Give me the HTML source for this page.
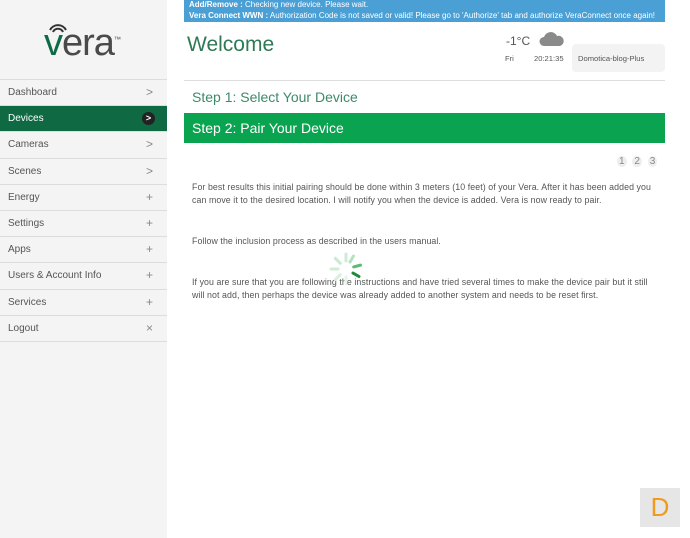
<!DOCTYPE html>
<html><head><style>
*{margin:0;padding:0;box-sizing:border-box}
body{width:690px;height:538px;overflow:hidden;background:#fff;font-family:"Liberation Sans",sans-serif;position:relative}
.side{position:absolute;left:0;top:0;width:167px;height:538px;background:#f4f4f4}
.logo{position:absolute;left:44px;top:22px;font-size:38px;color:#4a4a4a;letter-spacing:-1px}
.logo b{color:#0d6b45;font-weight:normal}
.menu{position:absolute;top:79px;left:0;width:167px;border-top:1px solid #ddd}
.menu div{height:26.2px;border-bottom:1px solid #ddd;font-size:10px;color:#555;padding:7px 0 0 8px;position:relative}
.menu div span{position:absolute;right:14px;top:5px;color:#888;font-size:12px}
.menu .act{background:#0f6a44;color:#fff}
.menu .act span{background:#222;color:#fff;border-radius:50%;width:13px;height:13px;font-size:9px;text-align:center;line-height:13px;top:6px;right:12px;font-weight:bold}
.banner{position:absolute;left:184px;top:0;width:481px;height:22px;background:#4a9fd5;color:#fff;font-size:8px;line-height:10.5px;padding:0 5px}
.t{position:absolute;color:#555;font-size:7.6px}
.p{position:absolute;color:#555;font-size:8.8px;line-height:13px;letter-spacing:0.08px}
</style></head><body>
<div class="side">
<div class="logo"><b>v</b>era<sup style="font-size:7px">™</sup></div>
<svg style="position:absolute;left:47px;top:20px" width="22" height="13"><path d="M3 10 A9 9 0 0 1 19 10 M6 12 A5.5 5.5 0 0 1 16 12" stroke="#333" stroke-width="2" fill="none"/></svg>
<div class="menu">
<div>Dashboard<span>&gt;</span></div>
<div class="act">Devices<span>&gt;</span></div>
<div>Cameras<span>&gt;</span></div>
<div>Scenes<span>&gt;</span></div>
<div>Energy<span>+</span></div>
<div>Settings<span>+</span></div>
<div>Apps<span>+</span></div>
<div>Users &amp; Account Info<span>+</span></div>
<div>Services<span>+</span></div>
<div>Logout<span>×</span></div>
</div></div>
<div class="banner"><b>Add/Remove :</b> Checking new device. Please wait.<br><b>Vera Connect WWN :</b> Authorization Code is not saved or valid! Please go to 'Authorize' tab and authorize VeraConnect once again!</div>
<div style="position:absolute;left:187px;top:33px;font-size:21px;color:#2e7a56">Welcome</div>
<div style="position:absolute;left:506px;top:34px;font-size:12px;color:#555">-1°C</div>
<svg style="position:absolute;left:539px;top:31px" width="26" height="16"><path d="M5 15 A4.5 4.5 0 0 1 5 6 A7 7 0 0 1 18 5 A5 5 0 0 1 21 15Z" fill="#8a8a8a"/></svg>
<div class="t" style="left:505px;top:54px">Fri</div>
<div class="t" style="left:534px;top:54px">20:21:35</div>
<div style="position:absolute;left:572px;top:44px;width:93px;height:28px;background:#f3f3f3;border-radius:4px;font-size:7.6px;color:#555;padding:10px 0 0 6px">Domotica-blog-Plus</div>
<div style="position:absolute;left:184px;top:80px;width:481px;height:1px;background:#ddd"></div>
<div style="position:absolute;left:192px;top:89px;font-size:14px;color:#3c8a68">Step 1: Select Your Device</div>
<div style="position:absolute;left:184px;top:113px;width:481px;height:30px;background:#0aa350;color:#fff;font-size:14px;padding:7px 0 0 8px">Step 2: Pair Your Device</div>
<div style="position:absolute;left:617px;top:156px;font-size:10px;color:#888;word-spacing:3px"><span style="background:#eee;border-radius:50%;padding:0 2px">1</span> <span style="background:#eee;border-radius:50%;padding:0 2px">2</span> <span style="background:#eee;border-radius:50%;padding:0 2px">3</span></div>
<div class="p" style="left:192px;top:181px;width:462px">For best results this initial pairing should be done within 3 meters (10 feet) of your Vera. After it has been added you can move it to the desired location. I will notify you when the device is added. Vera is now ready to pair.</div>
<div class="p" style="left:192px;top:235px">Follow the inclusion process as described in the users manual.</div>
<div class="p" style="left:192px;top:276px;width:462px">If you are sure that you are following the instructions and have tried several times to make the device pair but it still will not add, then perhaps the device was already added to another system and needs to be reset first.</div>
<svg style="position:absolute;left:328px;top:251px" width="36" height="36" viewBox="-18 -18 36 36">
<g stroke-width="3" stroke-linecap="round">
<line x1="0" y1="-8" x2="0" y2="-15" stroke="#cdebd5"/>
<line x1="5.7" y1="-5.7" x2="10.6" y2="-10.6" stroke="#b5e2c0" transform="rotate(-15)"/>
<line x1="8" y1="0" x2="15" y2="0" stroke="#5dbb74" transform="rotate(-15)"/>
<line x1="5.7" y1="5.7" x2="10.6" y2="10.6" stroke="#1d8a3c" transform="rotate(-15)"/>
<line x1="0" y1="8" x2="0" y2="15" stroke="#e6f4e9"/>
<line x1="-5.7" y1="5.7" x2="-10.6" y2="10.6" stroke="#d8efdd"/>
<line x1="-8" y1="0" x2="-15" y2="0" stroke="#d0ecd6"/>
<line x1="-5.7" y1="-5.7" x2="-10.6" y2="-10.6" stroke="#cbe9d2"/>
</g></svg>
<div style="position:absolute;left:640px;top:488px;width:40px;height:39px;background:#e6e6e6;color:#f29a1a;font-size:26px;text-align:center;line-height:39px">D</div>
</body></html>
